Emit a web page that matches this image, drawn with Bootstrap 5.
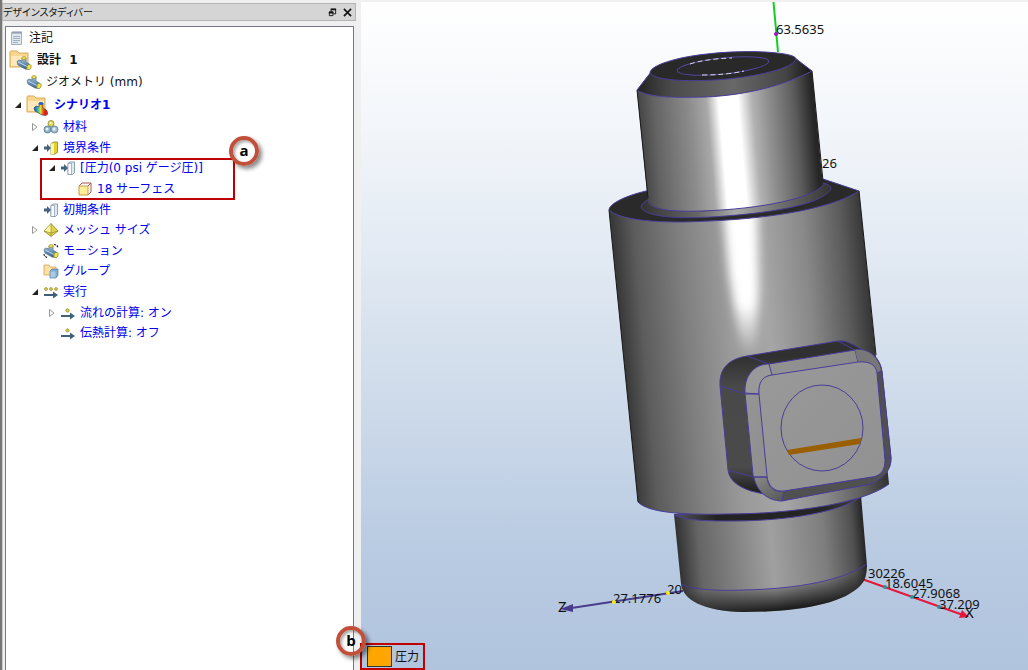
<!DOCTYPE html>
<html lang="ja">
<head>
<meta charset="utf-8">
<meta name="viewport" content="width=device-width, initial-scale=1">
<title>デザインスタディバー</title>
<link href="https://cdn.jsdelivr.net/npm/bootstrap@5.3.0/dist/css/bootstrap.min.css" rel="stylesheet">
<style>
body{background:#f0f0f0;color:#111;font:12px/20px "Noto Sans","Noto Sans CJK JP",sans-serif}
.study-bar{width:356px;border-left:2px solid #777;box-shadow:inset 1px 0 #ccc}
.bar-title{height:18px;margin-top:3px;background:#d5d5d5;border:1px solid #b4b4b4;font-family:"Noto Sans CJK JP",sans-serif;font-size:10px;line-height:16px;font-feature-settings:"palt"}
.bar-title h1{font:inherit}
.bar-btn{width:15px;height:16px;line-height:0}
.tree-box{background:#fff;border:1px solid #77778a;border-bottom:0;margin:5px 2px 0 3px}
.tree{font-family:"DejaVu Sans","Noto Sans CJK JP",sans-serif;font-size:12px;padding-left:3px}
.tree-row{display:flex;align-items:center;height:21px;white-space:nowrap;color:#0000ee}
.tree-row.tall{height:22px}
.tree-row.taller{height:23px}
.tree-row.short{height:20px}
.tree-row.dark{color:#111}
.tree-row.main{font-family:"DejaVu Sans","Noto Sans CJK JP",sans-serif;font-weight:700;line-height:18px}
.tree-row svg{flex:none}
.ico{width:16px;height:16px;margin-right:4px}
.ico-lg{width:24px;height:22px;margin-right:4px}
.twist{width:17px;height:16px;flex:none;line-height:0;text-align:left;padding-left:5px!important}
.twist svg{vertical-align:middle}
.lv1{padding-left:17px}.lv2{padding-left:34px}.lv3{padding-left:51px}.lv4{padding-left:68px}
.lv1.open{padding-left:0}.lv2.open{padding-left:17px}.lv3.open{padding-left:34px}
.marked{border:2px solid #c00000}
.marked-tree{left:31px;right:118px;top:0;bottom:-1px;pointer-events:none}
.callout{width:30px;height:30px;border:4px solid #c0503a;border-radius:50%;font:700 15px/20px "Open Sans",sans-serif;color:#000;text-align:center;box-shadow:3px 3px 4px #0007,inset 2px 2px 3px #0005}
.callout-a{right:-26px;top:-24px}
.callout-b{left:-26px;top:-19px}
.viewer{margin:2px 0 0 5px;background:linear-gradient(#fff,#f0f4f9 22%,#d5e0ed 52%,#b9cbe2 82%,#b1c4de)}
.viewer text{font-family:"Noto Sans",sans-serif;font-size:13px;fill:#111}
.viewer .axis-name{font-size:15px}
.legend{left:-1px;bottom:0;width:65px;height:27px;padding-left:5px}
.swatch{width:25px;height:21px;background:#ffa500;border:1px solid #333;margin-right:3px}
</style>
</head>
<body>
<svg class="position-absolute" width="0" height="0" aria-hidden="true">
<defs>
<linearGradient id="pipeFill" x1="0" y1="0" x2="0" y2="1"><stop stop-color="#a9c3da"/><stop offset=".5" stop-color="#6690b5"/><stop offset="1" stop-color="#3c5e82"/></linearGradient>
<linearGradient id="heat"><stop stop-color="#1749d8"/><stop offset=".3" stop-color="#24c1bc"/><stop offset=".5" stop-color="#e9dc28"/><stop offset=".7" stop-color="#ee5a13"/><stop offset="1" stop-color="#b20f0f"/></linearGradient>
</defs>
<symbol id="open" viewBox="0 0 8 8"><path d="M7 1v6H1z" fill="#222"/></symbol>
<symbol id="closed" viewBox="0 0 8 8"><path d="M1.500 .5v7L6 4z" fill="#fff" stroke="#999"/></symbol>
<symbol id="note" viewBox="0 0 16 16"><path d="M2.500 2.500h10v12h-10z" fill="#dfe8f0" stroke="#a3b1bf"/><path d="M4 1v3M6 1v3M8 1v3M10 1v3M12 1v3" stroke="#8294a6"/><path d="M4 6.500h7M4 8.500h7M4 10.500h7M4 12.500h5" stroke="#9fb1c2"/></symbol>
<symbol id="pipe" viewBox="0 0 16 16"><path d="M1 6.500 3 5l3 1V3h4v4l4 2.500-1.500 5L9 14l-7-4z" fill="url(#pipeFill)" stroke="#52708f" stroke-width=".7"/><path d="m2 7 10 5" stroke="#c4d8e8" stroke-width="1"/><ellipse cx="8" cy="3" rx="2.200" ry="1.500" fill="#f2e548" stroke="#8b852c" stroke-width=".6"/><ellipse cx="13" cy="12" rx="2" ry="2.800" transform="rotate(20 13 12)" fill="#f2e548" stroke="#8b852c" stroke-width=".7"/></symbol>
<symbol id="folderShape" viewBox="0 0 24 22"><path d="M1 18V3q0-1 1-1h6l2 2h9v14z" fill="#f8d690" stroke="#d9ab5a"/><path d="M2 7h16v10H2z" fill="#ffe9bb"/></symbol>
<symbol id="design" viewBox="0 0 24 22"><use href="#folderShape" width="24" height="22"/><use href="#pipe" x="7" y="6" width="16" height="16"/></symbol>
<symbol id="scenario" viewBox="0 0 24 22"><use href="#folderShape" width="24" height="22"/><path d="m8 14 2-2 3 1V9h4v5l4 2.500-1.500 5L16 21l-7-4z" fill="url(#heat)" stroke="#374266" stroke-width=".7"/><ellipse cx="15" cy="9.500" rx="2.200" ry="1.500" fill="#2560c8"/><ellipse cx="20" cy="19" rx="2" ry="2.500" fill="#d12420"/></symbol>
<symbol id="balls" viewBox="0 0 16 16"><circle cx="8" cy="4.500" r="3" fill="#e9dc55" stroke="#858034" stroke-width=".8"/><circle cx="4.500" cy="10.500" r="3.500" fill="#8fb2cd" stroke="#527792" stroke-width=".8"/><circle cx="11.500" cy="10.500" r="3.500" fill="#a3c0d5" stroke="#527792" stroke-width=".8"/><circle cx="4" cy="10" r="1.500" fill="#e7f2f9"/><circle cx="11" cy="10" r="1.500" fill="#e7f2f9"/><circle cx="7.500" cy="4" r="1" fill="#fff9c5"/></symbol>
<symbol id="arrowIn" viewBox="0 0 16 16"><path d="M1 6.500h3V4l4 4-4 4V9.500H1z" fill="#45637e"/></symbol>
<symbol id="bcYellow" viewBox="0 0 16 16"><path d="M8 3.500 11 2h3.500v10.500L11 14.500H8z" fill="#e3d02f" stroke="#8b8339" stroke-width=".8"/><path d="M8 3.500h3v11H8z" fill="#fff79b"/><use href="#arrowIn" width="16" height="16"/></symbol>
<symbol id="bcWhite" viewBox="0 0 16 16"><path d="M8 3.500 10 2h4.500v10.500l-2 2H8z" fill="#e0e9f2" stroke="#728ba2" stroke-width=".8"/><path d="M8 3.500h3.500v11H8z" fill="#fff" stroke="#728ba2" stroke-width=".6"/><use href="#arrowIn" width="16" height="16"/></symbol>
<symbol id="surface" viewBox="0 0 16 16"><path d="m2 5 3-3h9v9l-3 3z" fill="#fff" stroke="#a45a50"/><path d="M2 5h9v9H2z" fill="#ffed98" stroke="#cb9845"/><path d="m11 5 3-3" stroke="#a45a50"/></symbol>
<symbol id="mesh" viewBox="0 0 16 16"><path d="m8 1.500 7 7.500-7 5.500L1 9z" fill="#e3d344" stroke="#888036" stroke-width=".8"/><path d="M8 2 1.500 9 8 11z" fill="#fff79c"/><path d="M8 1.500v13M1 9l7 2 7-2" fill="none" stroke="#888036" stroke-width=".6"/></symbol>
<symbol id="motion" viewBox="0 0 16 16"><use href="#pipe" width="16" height="16"/><path d="M11 1.500q3 0 4 3M1 11q0 3 4 3.500" fill="none" stroke="#222" stroke-width="1.200" stroke-dasharray="2 1"/></symbol>
<symbol id="group" viewBox="0 0 16 16"><path d="M1 12V2h5l1 2h6v8z" fill="#ffe0a3" stroke="#d2a35a" stroke-width=".8"/><path d="m7 8 2-2h6v6l-2 3H7z" fill="#82abd0" stroke="#517a9e" stroke-width=".7"/><path d="M7.500 8.500h5v6h-5z" fill="#aecae3"/></symbol>
<symbol id="arrowRight" viewBox="0 0 16 16"><path d="M1 10h9V7.500l5 3.500-5 3.500V12H1z" fill="#3f6079"/></symbol>
<symbol id="run" viewBox="0 0 16 16"><g fill="#dacb3c" stroke="#888036" stroke-width=".6"><circle cx="3" cy="5" r="1.500"/><circle cx="8" cy="5" r="1.500"/><circle cx="13" cy="5" r="1.500"/></g><use href="#arrowRight" width="16" height="16"/></symbol>
<symbol id="calc" viewBox="0 0 16 16"><circle cx="7.500" cy="5.500" r="1.700" fill="#dacb3c" stroke="#888036" stroke-width=".6"/><use href="#arrowRight" width="16" height="16"/></symbol>
</svg>

<div class="d-flex vh-100 overflow-hidden">
<aside class="study-bar d-flex flex-column flex-shrink-0">
  <header class="bar-title d-flex align-items-center">
    <h1 class="m-0 me-auto">デザインスタディバー</h1>
    <button class="btn p-0 border-0 bar-btn" aria-label="元に戻す"><svg width="9" height="9" viewBox="0 0 10 10"><path d="M3.500 4V1.500h5v5H6" fill="none" stroke="#111"/><path d="M3 1.500h6M1 5h5" stroke="#111" stroke-width="2"/><path d="M1.500 4.500h4v4h-4z" fill="none" stroke="#111"/></svg></button>
    <button class="btn p-0 border-0 bar-btn" aria-label="閉じる"><svg width="9" height="9" viewBox="0 0 10 10"><path d="m1 1 8 8M9 1 1 9" stroke="#111" stroke-width="1.800"/></svg></button>
  </header>
  <section class="tree-box flex-grow-1">
    <div class="tree">
      <div class="tree-row dark"><svg class="ico"><use href="#note"/></svg>注記</div>
      <div class="tree-row dark main taller"><svg class="ico-lg"><use href="#design"/></svg>設計&nbsp; 1</div>
      <div class="tree-row dark tall lv1"><svg class="ico"><use href="#pipe"/></svg>ジオメトリ (mm)</div>
      <div class="tree-row main taller lv1 open"><button class="btn border-0 p-0 twist" aria-label="折りたたむ"><svg width="8" height="8"><use href="#open"/></svg></button><svg class="ico-lg"><use href="#scenario"/></svg>シナリオ1</div>
      <div class="tree-row lv2 open"><button class="btn border-0 p-0 twist" aria-label="展開"><svg width="8" height="8"><use href="#closed"/></svg></button><svg class="ico"><use href="#balls"/></svg>材料</div>
      <div class="tree-row lv2 open"><button class="btn border-0 p-0 twist" aria-label="折りたたむ"><svg width="8" height="8"><use href="#open"/></svg></button><svg class="ico"><use href="#bcYellow"/></svg>境界条件</div>
      <div class="position-relative">
        <div class="tree-row short lv3 open"><button class="btn border-0 p-0 twist" aria-label="折りたたむ"><svg width="8" height="8"><use href="#open"/></svg></button><svg class="ico"><use href="#bcWhite"/></svg>[圧力(0 psi ゲージ圧)]</div>
        <div class="tree-row lv4"><svg class="ico"><use href="#surface"/></svg>18 サーフェス</div>
        <div class="position-absolute marked marked-tree"><span class="position-absolute callout callout-a">a</span></div>
      </div>
      <div class="tree-row lv2"><svg class="ico"><use href="#bcWhite"/></svg>初期条件</div>
      <div class="tree-row short lv2 open"><button class="btn border-0 p-0 twist" aria-label="展開"><svg width="8" height="8"><use href="#closed"/></svg></button><svg class="ico"><use href="#mesh"/></svg>メッシュ サイズ</div>
      <div class="tree-row lv2"><svg class="ico"><use href="#motion"/></svg>モーション</div>
      <div class="tree-row short lv2"><svg class="ico"><use href="#group"/></svg>グループ</div>
      <div class="tree-row lv2 open"><button class="btn border-0 p-0 twist" aria-label="折りたたむ"><svg width="8" height="8"><use href="#open"/></svg></button><svg class="ico"><use href="#run"/></svg>実行</div>
      <div class="tree-row lv3 open"><button class="btn border-0 p-0 twist" aria-label="展開"><svg width="8" height="8"><use href="#closed"/></svg></button><svg class="ico"><use href="#calc"/></svg>流れの計算: オン</div>
      <div class="tree-row short lv3"><svg class="ico"><use href="#calc"/></svg>伝熱計算: オフ</div>
    </div>
  </section>
</aside>

<main class="viewer flex-grow-1 position-relative">
<svg class="d-block w-100 h-100" viewBox="361 2 667 668" role="img" aria-label="バルブモデル">
<defs>
<linearGradient id="neck" gradientUnits="userSpaceOnUse" x1="640" y1="150" x2="815" y2="135"><stop stop-color="#414141"/><stop offset=".1" stop-color="#636363"/><stop offset=".3" stop-color="#8c8c8c"/><stop offset=".4" stop-color="#a8a8a8"/><stop offset=".47" stop-color="#fff"/><stop offset=".58" stop-color="#fff"/><stop offset=".66" stop-color="#b2b2b2"/><stop offset=".74" stop-color="#929292"/><stop offset=".9" stop-color="#5b5b5b"/><stop offset="1" stop-color="#262626"/></linearGradient>
<linearGradient id="body" gradientUnits="userSpaceOnUse" x1="624" y1="350" x2="876" y2="328"><stop stop-color="#3a3a3a"/><stop offset=".08" stop-color="#5c5c5c"/><stop offset=".25" stop-color="#7e7e7e"/><stop offset=".42" stop-color="#9a9a9a"/><stop offset=".58" stop-color="#a6a6a6"/><stop offset=".75" stop-color="#888"/><stop offset=".9" stop-color="#5a5a5a"/><stop offset="1" stop-color="#303030"/></linearGradient>
<linearGradient id="foot" gradientUnits="userSpaceOnUse" x1="677" y1="555" x2="866" y2="538"><stop stop-color="#2f2f2f"/><stop offset=".12" stop-color="#656565"/><stop offset=".5" stop-color="#a0a0a0"/><stop offset=".78" stop-color="#7d7d7d"/><stop offset=".93" stop-color="#505050"/><stop offset="1" stop-color="#202020"/></linearGradient>
<filter id="soft" x="-50%" y="-20%" width="200%" height="140%"><feGaussianBlur stdDeviation="5"/></filter>
<linearGradient id="fade" gradientUnits="userSpaceOnUse" x1="0" y1="210" x2="0" y2="355"><stop stop-color="#fff"/><stop offset=".65" stop-color="#fff"/><stop offset="1" stop-color="#fff" stop-opacity="0"/></linearGradient>
<clipPath id="bodyClip"><path d="m609 210 29 292h251l-30-311c-30 16-80 25-150 30-50 3-90-1-100-11z"/></clipPath>
<linearGradient id="cone"><stop stop-color="#222"/><stop offset=".2" stop-color="#4b4b4b"/><stop offset=".55" stop-color="#686868"/><stop offset=".85" stop-color="#444"/><stop offset="1" stop-color="#151515"/></linearGradient>
<linearGradient id="footShade" gradientUnits="userSpaceOnUse" x1="750" y1="585" x2="753" y2="612"><stop stop-color="#111" stop-opacity="0"/><stop offset="1" stop-color="#111" stop-opacity=".9"/></linearGradient>
<linearGradient id="rim"><stop stop-color="#555"/><stop offset=".2" stop-color="#222"/><stop offset=".7" stop-color="#252525"/><stop offset="1" stop-color="#555"/></linearGradient>
<linearGradient id="collar"><stop stop-color="#333"/><stop offset=".3" stop-color="#666"/><stop offset=".5" stop-color="#aaa"/><stop offset=".7" stop-color="#777"/><stop offset="1" stop-color="#333"/></linearGradient>
<linearGradient id="side" gradientUnits="userSpaceOnUse" x1="0" y1="356" x2="0" y2="496"><stop stop-color="#303030"/><stop offset=".22" stop-color="#494949"/><stop offset=".8" stop-color="#4a4a4a"/><stop offset="1" stop-color="#181818"/></linearGradient>
<linearGradient id="bevel" gradientUnits="userSpaceOnUse" x1="750" y1="390" x2="895" y2="440"><stop stop-color="#949494"/><stop offset=".65" stop-color="#888"/><stop offset=".85" stop-color="#444"/></linearGradient>
<linearGradient id="face" x1="0" y1="0" x2="1" y2="1"><stop stop-color="#999"/><stop offset="1" stop-color="#919191"/></linearGradient>
<linearGradient id="lowCorner" x1="0" y1="0" x2="1" y2="1"><stop stop-color="#8b8b8b"/><stop offset="1" stop-color="#555"/></linearGradient>
</defs>
<path d="m773.500 2 4.500 50" stroke="#10d020" stroke-width="2"/>
<text x="776" y="34">63.5635</text><circle cx="776" cy="34" r="2" fill="#9418bd"/>
<text x="822" y="168">26</text>
<path d="m565 609 118-18" stroke="#483d8b" stroke-width="2"/><path d="m560 609 13-5v8z" fill="#483d8b"/>
<text x="613" y="603">27.1776</text><text x="667" y="594">20</text><text class="axis-name" x="558" y="612">Z</text>
<circle cx="614" cy="602" r="2" fill="#fe0"/><circle cx="668" cy="593" r="2" fill="#fe0"/>
<path d="m862 579 101 36" stroke="#e6163d" stroke-width="2"/><path d="m969 617-7-7-3 8z" fill="#e6163d"/>
<text x="868" y="578">30226</text><text x="885" y="588">18.6045</text><text x="912" y="598">27.9068</text><text x="939" y="609">37.209</text><text class="axis-name" x="965" y="618">X</text>
<g fill="#22969c"><circle cx="885" cy="587" r="2"/><circle cx="912" cy="597" r="2"/><circle cx="939" cy="607" r="2"/></g>
<g stroke-linejoin="round">
<path d="m674 514 7 70c2 16 22 27 62 28 59 0 100-9 117-26q7-7 7-20l-6-71z" fill="url(#foot)"/>
<path d="M681 583c8 7 36 8 62 7 57-1 100-10 124-25 1 12-2 16-7 21-17 17-58 26-117 26-40-1-60-12-62-29z" fill="url(#footShade)"/>
<path d="M681 584c10 6 40 7 62 6 55-1 101-10 124-26" fill="none" stroke="#483d99"/>
<path d="M674 515c12 6 38 6 58 6 55 0 108-9 129-24l26-14-110 25z" fill="url(#rim)" stroke="#483d99"/>
<path d="m609 210 29 292c10 11 48 13 88 12 68 0 138-11 163-30l-30-293c-30 16-80 25-150 30-50 3-90-1-100-11z" fill="url(#body)"/>
<path d="M638 502c10 11 48 13 88 12 68 0 138-11 163-30" fill="none" stroke="#483d99"/>
<g clip-path="url(#bodyClip)"><path d="M721 190h36l2 100-4 70h-12l-14-85z" fill="url(#fade)" filter="url(#soft)"/></g>
<path d="M609 210c0-5 12-13 37-19l177-12 36 12c-25 16-81 27-150 30-50 3-90-1-100-11z" fill="#2a2a2a" stroke="#483d99"/>
<path d="M647 200q-6 4-6 7c4 9 29 12 70 10 68-4 112-14 120-28q1-4-9-6l-40 18-80 10z" fill="url(#collar)" stroke="#483d99"/>
<path d="m637 90 11 112c5 8 24 10 54 9 60-2 111-13 121-26L812 71c-25 13-62 24-107 26-35 1-58 0-68-7z" fill="url(#neck)"/>
<path d="M648 202c5 8 24 10 54 9 60-2 111-13 121-26" fill="none" stroke="#483d99"/>
<path d="m637 90 14-18 144-14 17 13c-25 13-62 24-107 26-35 1-58 0-68-7z" fill="url(#cone)" stroke="#483d99"/>
<path d="M650 73c0-8 28-16 57-19 25-3 53-3 70-1 10 1 19 3 19 6-2 9-38 18-81 21-40 2-61-1-65-7z" fill="#292929" stroke="#483d99"/>
<ellipse cx="723" cy="66" rx="46" ry="8" transform="rotate(-6 723 66)" fill="none" stroke="#5147a1"/>
<path d="M690 64q15-5 42-6M702 75q25 0 42-4" fill="none" stroke="#ddd" stroke-dasharray="5 3"/>
</g>
<path d="m637 90 11 108M812 71l11 110M609 210l29 292M859 191l17 164" fill="none" stroke="#181818"/>
<g stroke="#483d99" stroke-linejoin="round">
<path d="M720 386c-1-18 9-27 27-30l91-15q7-1 14 3l13 7-93 145-21-5c-15-5-22-12-23-21z" fill="url(#side)"/>
<path d="M745 393c-1-17 9-29 24-29l86-14c16-1 25 8 27 22l9 86c0 13-8 20-20 22l-89 20c-15 0-26-12-29-25z" fill="url(#bevel)"/>
<path d="m782 501 2-10 88-14c9-2 13-8 13-18l-8-86c-1-8-7-12-19-11l-3-12c16-1 25 8 27 22l9 86c0 13-8 20-20 26z" fill="#505050"/>
<path d="M855 350c12-2 23 6 26 20l-4 3c-1-8-7-12-19-11z" fill="#777" stroke="none"/>
<path d="M754 477h13c1 10 7 16 17 14l-2 10c-15 0-26-11-28-24z" fill="url(#lowCorner)"/>
<path d="M745 393c-1-17 9-29 24-29l3 11c-9 2-13 8-13 19z" fill="#999"/>
<path d="M759 394c-1-12 4-18 13-19l86-13c12-1 18 3 19 11l8 87c0 10-4 16-13 17l-88 14c-10 1-16-5-17-15z" fill="url(#face)"/>
<path d="m720 386 25 8h14M728 470l26 7h13M747 356l22 8M838 341l17 9M872 477l-1 8M877 373l5-1M885 459l6-2" fill="none"/>
<ellipse cx="822" cy="428" rx="41" ry="43" fill="none"/>
</g>
<path d="m787 450 74-12-1 6-71 11z" fill="#9a6000"/>
</svg>
<div class="position-absolute marked legend d-flex align-items-center"><span class="swatch"></span><span>圧力</span><span class="position-absolute callout callout-b">b</span></div>
</main>
</div>
<script src="https://cdn.jsdelivr.net/npm/bootstrap@5.3.0/dist/js/bootstrap.bundle.min.js"></script>
</body>
</html>
